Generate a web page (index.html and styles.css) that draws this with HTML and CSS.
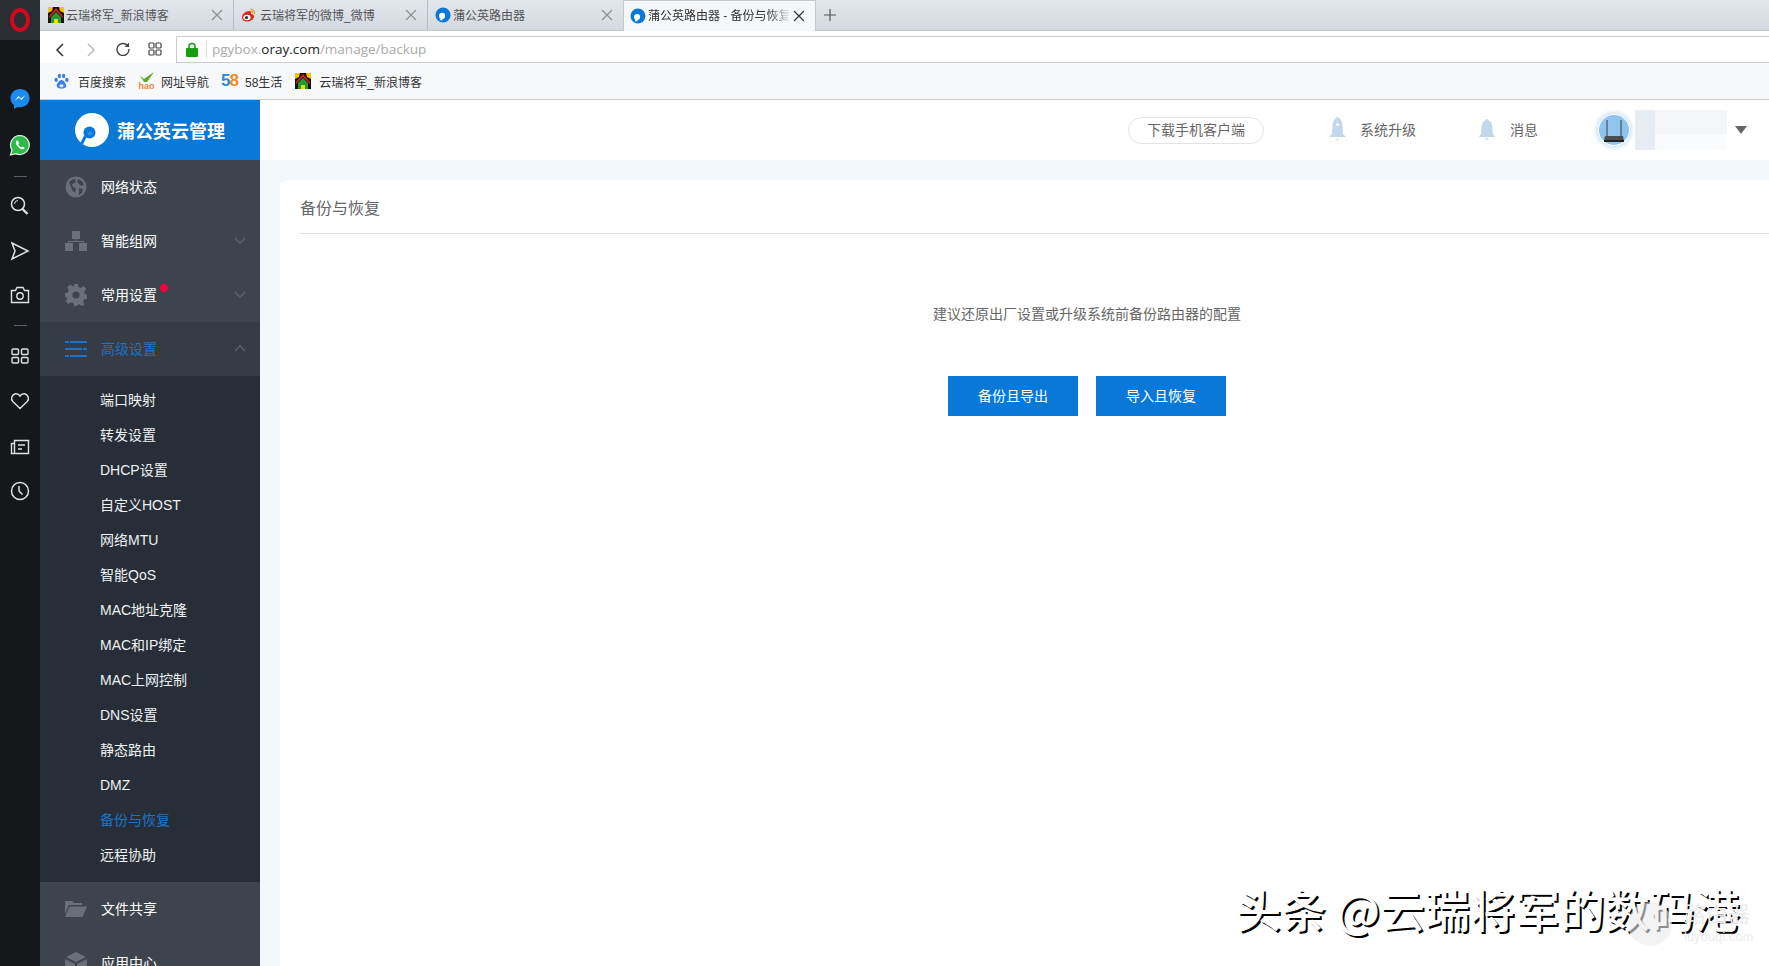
FILE: index.html
```html
<!DOCTYPE html>
<html lang="zh-CN">
<head>
    <meta charset="UTF-8">
    <title>蒲公英路由器 - 备份与恢复</title>
    <link rel="stylesheet" href="styles.css">
</head>
<body>
<svg class="defs" width="0" height="0">
    <symbol id="i-house" viewBox="0 0 16 16">
        <rect width="16" height="16" fill="#111"/>
        <path d="M0 0h5l-1 4-4 2zM16 0h-5l1 4 4 2z" fill="#f2c200"/>
        <path d="M8 1l7 8v2L8 4 1 11V9z" fill="#d8201c"/>
        <path d="M3 16v-6l5-5 5 5v6h-3v-4H6v4z" fill="#1e9c2e"/>
        <path d="M6 16v-4h4v4z" fill="#f2d600"/>
    </symbol>
    <symbol id="i-fav" viewBox="0 0 18 18">
        <circle cx="9" cy="9" r="8.500" fill="#0a78d6"/>
        <circle cx="8" cy="10" r="3.400" fill="#fff"/>
        <path d="M5 15l2-3 2 3z" fill="#fff"/>
    </symbol>
</svg>
<aside class="rail">
    <div class="rail-top">
        <svg width="22" height="24" viewBox="0 0 22 24"><ellipse cx="11" cy="12" rx="8" ry="10" fill="none" stroke="#d2081e" stroke-width="4"/></svg>
    </div>
    <div class="rail-icons">
        <svg class="r-msg" width="22" height="24" viewBox="0 0 22 24"><path d="M11 2C5.500 2 1.500 6 1.500 11c0 3 1.300 5.400 3.500 7v4l3.500-2c.8.200 1.600.300 2.500.300 5.500 0 9.500-4 9.500-9.300S16.500 2 11 2z" fill="#1a8cf0"/><path d="M5.500 14l4-5 2.500 2.500L16.500 8l-4 5-2.500-2.500z" fill="#fff"/></svg>
        <svg class="r-wa" width="22" height="24" viewBox="0 0 22 24"><path d="M11 2.500a9.500 9.500 0 0 0-8 14.500L1.500 22l5.200-1.400A9.500 9.500 0 1 0 11 2.500z" fill="#2fb84a" stroke="#e8f5ea" stroke-width="1.200"/><path d="M7.500 7.500c-1 1-1 2.800.5 5s3.800 3.800 5.500 3.800c1 0 2-.6 2.200-1.600l-2.200-1.300-1 1c-1.300-.4-2.800-2-3.200-3.200l1-1-1.200-2.500z" fill="#fff"/></svg>
        <i class="r-dash"></i>
        <svg class="r-search" width="20" height="20" viewBox="0 0 20 20" fill="none" stroke="#dfe2e4" stroke-width="1.500"><circle cx="8" cy="8" r="6.500"/><path d="M12.500 13l5 5" stroke-width="2.400"/><path d="M4.500 8A3.500 3.500 0 0 1 8 4.500" stroke-width="1"/></svg>
        <svg class="r-send" width="20" height="22" viewBox="0 0 20 22" fill="none" stroke="#dfe2e4" stroke-width="1.500"><path d="M2 3l16 8-16 8 3-8z"/></svg>
        <svg class="r-cam" width="20" height="18" viewBox="0 0 20 18" fill="none" stroke="#dfe2e4" stroke-width="1.400"><path d="M1.500 4.500h4l1.500-3h6l1.500 3h4v12h-17z"/><circle cx="10" cy="10" r="3.200"/></svg>
        <i class="r-dash r-dash2"></i>
        <svg class="r-grid" width="18" height="16" viewBox="0 0 18 16" fill="none" stroke="#dfe2e4" stroke-width="1.400"><rect x="1" y="1" width="6.500" height="5.500" rx="1"/><rect x="10.500" y="1" width="6.500" height="5.500" rx="1"/><rect x="1" y="9.500" width="6.500" height="5.500" rx="1"/><rect x="10.500" y="9.500" width="6.500" height="5.500" rx="1"/></svg>
        <svg class="r-heart" width="20" height="18" viewBox="0 0 20 18" fill="none" stroke="#dfe2e4" stroke-width="1.400"><path d="M10 16.500L2.800 9.500C.5 7 1.500 2.500 5.500 1.800 7.500 1.500 9 2.500 10 4c1-1.500 2.500-2.500 4.500-2.200 4 .7 5 5.200 2.700 7.700z"/></svg>
        <svg class="r-news" width="20" height="16" viewBox="0 0 20 16" fill="none" stroke="#dfe2e4" stroke-width="1.400"><path d="M4.500 1.500h14v13H1.500v-10h3zM4.500 4.500v10M8 6h7M8 10h4"/></svg>
        <svg class="r-clock" width="20" height="20" viewBox="0 0 20 20" fill="none" stroke="#dfe2e4" stroke-width="1.500"><circle cx="10" cy="10" r="8.500"/><path d="M9 5v5l3.500 3.500"/></svg>
    </div>
</aside>

<div class="window">
    <div class="tabs">
        <div class="tab tab-1">
            <svg width="16" height="16"><use href="#i-house"/></svg>
            <span class="tab-text">云瑞将军_新浪博客</span>
            <svg class="tab-x" width="12" height="12" viewBox="0 0 12 12"><path d="M1 1l10 10M11 1L1 11" stroke="#8a8d92" stroke-width="1.100"/></svg>
        </div>
        <div class="tab tab-2">
            <svg width="16" height="16" viewBox="0 0 16 16"><path d="M2 10c0-3 4-6 7-6 2 0 2.500 1.500 2 3 2 0 3 1 3 2.500C14 12 11 14.500 7 14.500 4 14.500 2 13 2 10z" fill="#d8281e"/><ellipse cx="7" cy="10.500" rx="3.600" ry="2.700" fill="#fff"/><circle cx="6.500" cy="10.500" r="1.500" fill="#222"/><path d="M10 2c3 0 5 2 4.500 5M10.500 4c1.500 0 2.500 1 2.200 2.500" fill="none" stroke="#f09a1a" stroke-width="1.200"/></svg>
            <span class="tab-text">云瑞将军的微博_微博</span>
            <svg class="tab-x" width="12" height="12" viewBox="0 0 12 12"><path d="M1 1l10 10M11 1L1 11" stroke="#8a8d92" stroke-width="1.100"/></svg>
        </div>
        <div class="tab tab-3">
            <svg width="16" height="16"><use href="#i-fav"/></svg>
            <span class="tab-text">蒲公英路由器</span>
            <svg class="tab-x" width="12" height="12" viewBox="0 0 12 12"><path d="M1 1l10 10M11 1L1 11" stroke="#8a8d92" stroke-width="1.100"/></svg>
        </div>
        <div class="tab tab-on">
            <svg width="16" height="16"><use href="#i-fav"/></svg>
            <span class="tab-text">蒲公英路由器 - 备份与恢复</span>
            <svg class="tab-x" width="12" height="12" viewBox="0 0 12 12"><path d="M1 1l10 10M11 1L1 11" stroke="#333" stroke-width="1.200"/></svg>
        </div>
        <svg class="tab-add" width="12" height="12" viewBox="0 0 12 12"><path d="M6 0v12M0 6h12" stroke="#555" stroke-width="1.200"/></svg>
    </div>

    <div class="toolbar">
        <svg class="tb-btn" width="10" height="16" viewBox="0 0 10 16"><path d="M8 2L2 8l6 6" fill="none" stroke="#333" stroke-width="1.500"/></svg>
        <svg class="tb-btn" width="10" height="16" viewBox="0 0 10 16"><path d="M2 2l6 6-6 6" fill="none" stroke="#bbb" stroke-width="1.500"/></svg>
        <svg class="tb-btn" width="14" height="14" viewBox="0 0 14 14"><path d="M11.500 3.500A6 6 0 1 0 13 7" fill="none" stroke="#444" stroke-width="1.400"/><path d="M13 .5v4.500H8.500z" fill="#444"/></svg>
        <svg class="tb-btn" width="14" height="14" viewBox="0 0 14 14" fill="none" stroke="#444" stroke-width="1.200"><rect x="1" y="1" width="5" height="5" rx="1"/><rect x="8" y="1" width="5" height="5" rx="1"/><rect x="1" y="8" width="5" height="5" rx="1"/><rect x="8" y="8" width="5" height="5" rx="1"/></svg>
        <div class="address">
            <svg width="12" height="15" viewBox="0 0 12 15"><path d="M3 7V4.500a3 3 0 0 1 6 0V7" fill="none" stroke="#12a012" stroke-width="1.600"/><rect y="6" width="12" height="9" rx="1" fill="#12a012"/></svg>
            <i class="addr-sep"></i>
            <span class="url">pgybox.<b>oray.com</b>/manage/backup</span>
        </div>
    </div>

    <div class="bookmarks">
        <a class="bm bm-1">
            <svg width="15" height="16" viewBox="0 0 14 15" fill="#3f7fe0"><ellipse cx="2" cy="6.500" rx="1.600" ry="2"/><ellipse cx="5" cy="2.800" rx="1.600" ry="2.200"/><ellipse cx="9" cy="2.800" rx="1.600" ry="2.200"/><ellipse cx="12" cy="6.500" rx="1.600" ry="2"/><path d="M7 6.500c2 0 4.500 3.500 4.500 5.500S9 15 7 14.500C5 15 2.500 14 2.500 12S5 6.500 7 6.500z"/><ellipse cx="7" cy="12" rx="2" ry="1.500" fill="#dbe8fb"/></svg>
            <span>百度搜索</span>
        </a>
        <a class="bm bm-2">
            <span class="hao"><svg width="17" height="10" viewBox="0 0 17 10"><path d="M2 3.500l4 3.500L16 0l-7 10H6z" fill="#5fa52a"/></svg><em>hao</em></span>
            <span>网址导航</span>
        </a>
        <a class="bm bm-3">
            <span class="b58"><em class="c5">5</em><em class="c8">8</em></span>
            <span>58生活</span>
        </a>
        <a class="bm bm-4">
            <svg width="16" height="16"><use href="#i-house"/></svg>
            <span>云瑞将军_新浪博客</span>
        </a>
    </div>

    <div class="page">
        <nav class="nav">
            <div class="logo">
                <svg width="34" height="34" viewBox="0 0 34 34"><circle cx="17" cy="17" r="17" fill="#fff"/><circle cx="14.500" cy="19.500" r="6" fill="#0a78d6"/><path d="M10.500 23L6.500 31" stroke="#0a78d6" stroke-width="3"/><circle cx="15" cy="20.500" r="2.200" fill="#2f8fe0"/></svg>
                <span>蒲公英云管理</span>
            </div>
            <div class="nav-item">
                <svg class="nav-ico" width="22" height="22" viewBox="0 0 22 22"><circle cx="11" cy="11" r="10.500" fill="#6b7078"/><path d="M4 6l4-3 3 1-1 3-3 1 1 3 3 1-1 5-3-3-1-3zM13 3l4 2 2 4-3 1-2-2-2-2zM14 12l4 1-1 4-3 2z" fill="#3d444e"/></svg>
                <span>网络状态</span>
            </div>
            <div class="nav-item">
                <svg class="nav-ico" width="22" height="20" viewBox="0 0 22 20" fill="#6b7078"><rect x="7" y="0" width="8" height="8"/><rect x="0" y="12" width="8" height="8"/><rect x="14" y="12" width="8" height="8"/><path d="M10.500 8h1v2H19v2h-1v-1H4v1H3v-2h7.500z"/></svg>
                <span>智能组网</span>
                <svg class="chev" width="12" height="7" viewBox="0 0 12 7"><path d="M1 1l5 5 5-5" fill="none" stroke="#5b626c" stroke-width="1.300"/></svg>
            </div>
            <div class="nav-item">
                <svg class="nav-ico" width="22" height="22" viewBox="0 0 22 22"><path d="M9 0h4l.6 3 2.400 1 2.600-1.700 2.800 2.800L19 7.700l1 2.400 2 .9v4l-3 .6-1 2.400 1.700 2.600-2.800 1.300-2.600-1.700-2.300 1L13 22H9l-.6-2.800-2.400-1-2.600 1.700-2.800-2.800L2.300 15.500l-1-2.400L0 13V9l2.800-.6 1-2.400-1.600-2.600L5 .6l2.600 1.700L9 2z" fill="#6b7078"/><circle cx="11" cy="11" r="3.600" fill="#3d444e"/></svg>
                <span class="has-dot">常用设置<i class="dot"></i></span>
                <svg class="chev" width="12" height="7" viewBox="0 0 12 7"><path d="M1 1l5 5 5-5" fill="none" stroke="#5b626c" stroke-width="1.300"/></svg>
            </div>
            <div class="nav-item nav-open">
                <svg class="nav-ico" width="22" height="16" viewBox="0 0 22 16" fill="#1a73c8"><path d="M0 0h4v2H0zM5 0h17v2H5zM0 7h17v2H0zM18 7h4v2h-4zM0 14h4v2H0zM5 14h17v2H5z"/></svg>
                <span>高级设置</span>
                <svg class="chev" width="12" height="7" viewBox="0 0 12 7"><path d="M1 6l5-5 5 5" fill="none" stroke="#5b626c" stroke-width="1.300"/></svg>
            </div>
            <ul class="sub">
                <li>端口映射</li>
                <li>转发设置</li>
                <li>DHCP设置</li>
                <li>自定义HOST</li>
                <li>网络MTU</li>
                <li>智能QoS</li>
                <li>MAC地址克隆</li>
                <li>MAC和IP绑定</li>
                <li>MAC上网控制</li>
                <li>DNS设置</li>
                <li>静态路由</li>
                <li>DMZ</li>
                <li class="cur">备份与恢复</li>
                <li>远程协助</li>
            </ul>
            <div class="nav-item">
                <svg class="nav-ico" width="22" height="16" viewBox="0 0 22 16" fill="#6b7078"><path d="M0 0h7l2 2h8v2H4L0 13z"/><path d="M4.500 5.500H22L17.500 16H0z"/></svg>
                <span>文件共享</span>
            </div>
            <div class="nav-item">
                <svg class="nav-ico" width="22" height="22" viewBox="0 0 22 22" fill="#6b7078"><path d="M11 0l10 5-10 5L1 5z"/><path d="M0 7l10 5v10L0 17zM22 7l-10 5v10l10-5z"/></svg>
                <span>应用中心</span>
            </div>
        </nav>

        <main class="main">
            <header class="head">
                <a class="pill">下载手机客户端</a>
                <a class="head-link head-up">
                    <svg width="17" height="26" viewBox="0 0 17 26"><path d="M8.500 0c3 1.500 4.500 4 5 8l.5 9 3 3H0l3-3 .5-9c.5-4 2-6.500 5-8z" fill="#c3d6ec"/><circle cx="8.500" cy="7.500" r="1.600" fill="#fff"/><rect x="7.500" y="21.500" width="2" height="2.500" fill="#d8e4f2"/></svg>
                    <span>系统升级</span>
                </a>
                <a class="head-link head-msg">
                    <svg width="16" height="24" viewBox="0 0 16 24"><path d="M8 1c1 0 1.500.8 1.500 1.500C12.500 3.500 13 6 13.500 10l.5 6 2 3H0l2-3 .5-6C3 6 3.500 3.500 6.500 2.500 6.500 1.800 7 1 8 1z" fill="#c3d6ec"/><rect x="6.500" y="20" width="3" height="2.500" rx="1" fill="#d8e4f2"/></svg>
                    <span>消息</span>
                </a>
                <div class="avatar">
                    <svg width="30" height="30" viewBox="0 0 30 30"><circle cx="15" cy="15" r="15" fill="#8fc4ee"/><path d="M8 5v16M22 5v16" stroke="#45484c" stroke-width="1.100"/><path d="M6 21h18l1 5H5z" fill="#4a4d52"/><rect x="5" y="25" width="20" height="2" fill="#222"/></svg>
                </div>
                <div class="user-blur"></div>
                <i class="caret"></i>
            </header>
            <section class="card">
                <h2 class="card-title">备份与恢复</h2>
                <p class="tip">建议还原出厂设置或升级系统前备份路由器的配置</p>
                <div class="actions">
                    <button class="btn">备份且导出</button>
                    <button class="btn">导入且恢复</button>
                </div>
            </section>
        </main>
    </div>
</div>

<div class="mark">
    <span class="mark-text">头条 @云瑞将军的数码港</span>
    <i class="mark-ring"></i>
    <span class="mark-site"><b>路由器</b>luyouqi.com</span>
</div>
</body>
</html>
```

FILE: styles.css
```css
* {
    margin: 0;
    padding: 0;
    box-sizing: border-box;
}

html, body {
    height: 100%;
    overflow: hidden;
}

body {
    display: flex;
    font-family: "Liberation Sans", "Noto Sans CJK SC", sans-serif;
    font-size: 14px;
    color: #333;
    background: #fff;
}

.defs {
    position: absolute;
}

ul {
    list-style: none;
}

em {
    font-style: normal;
}

/* opera side rail */
.rail {
    flex: 0 0 40px;
    background: #14181b;
}

.rail-top {
    height: 40px;
    display: flex;
    align-items: center;
    justify-content: center;
    background: #2a2e33;
}

.rail-icons {
    display: flex;
    flex-direction: column;
    align-items: center;
    padding-top: 47px;
}

.r-wa { margin-top: 22px; }
.r-send { margin-top: 24px; }
.r-cam { margin-top: 24px; }
.r-heart { margin-top: 28px; }
.r-news { margin-top: 29px; }
.r-clock { margin-top: 26px; }

.r-dash {
    display: block;
    width: 13px;
    height: 1px;
    margin-top: 19px;
    background: #5a5e62;
}

.r-search { margin-top: 19px; }
.r-dash2 { margin-top: 21px; }
.r-grid { margin-top: 22px; }

.window {
    flex: 1;
    min-width: 0;
    display: flex;
    flex-direction: column;
}

/* tabs */
.tabs {
    height: 31px;
    flex: none;
    display: flex;
    align-items: center;
    background: linear-gradient(#e3e7ed, #d4d8df);
    border-bottom: 1px solid #c4c7cb;
    font-size: 12px;
    color: #555;
}

.tab {
    height: 30px;
    display: flex;
    align-items: center;
    padding-right: 10px;
}

.tab-text {
    white-space: nowrap;
    overflow: hidden;
    padding-bottom: 2px;
}

.tab-1,
.tab-2 {
    width: 194px;
    border-right: 1px solid #b9bdc3;
}

.tab-1 { padding-left: 8px; }
.tab-2 { padding-left: 6px; }
.tab-3 { width: 195px; padding-left: 7px; }

.tab-1 .tab-text { flex: 1; padding-left: 2px; }
.tab-2 .tab-text { flex: 1; padding-left: 4px; }
.tab-3 .tab-text { flex: 1; padding-left: 2px; }

.tab-on {
    width: 193px;
    height: 31px;
    padding-left: 6px;
    background: #f6f7f9;
    border: 1px solid #c4c7cb;
    border-width: 1px 1px 0;
    color: #333;
}

.tab-on .tab-text {
    width: 146px;
    padding-left: 2px;
    -webkit-mask-image: linear-gradient(90deg, #000 85%, transparent);
    mask-image: linear-gradient(90deg, #000 85%, transparent);
}

.tab-on .tab-x {
    margin-left: 2px;
}

.tab-add {
    margin-left: 8px;
}

/* toolbar */
.toolbar {
    height: 32px;
    flex: none;
    display: flex;
    padding: 5px 0 0 15px;
    background: #fff;
}

.tb-btn {
    flex: none;
    margin: 6px 21px 0 0;
}

.tb-btn:nth-child(2) { margin-right: 20px; }
.tb-btn:nth-child(3) { margin-right: 18px; }
.tb-btn:nth-child(4) { margin-right: 14px; }

.address {
    flex: 1;
    height: 27px;
    display: flex;
    align-items: center;
    padding-left: 9px;
    border: 1px solid #ccc;
    border-right: 0;
}

.addr-sep {
    width: 1px;
    height: 17px;
    margin: 0 5px 0 8px;
    background: #ddd;
}

.url {
    font-family: "Open Sans", "Liberation Sans", sans-serif;
    font-size: 13.500px;
    padding-bottom: 2px;
    color: #aaa;
}

.url b {
    font-weight: 400;
    color: #222;
}

/* bookmarks */
.bookmarks {
    height: 37px;
    flex: none;
    display: flex;
    align-items: center;
    padding-left: 14px;
    background: #f7f8fa;
    border-bottom: 1px solid #ccc;
    font-size: 12px;
    color: #333;
}

.bm {
    display: flex;
    align-items: center;
}

.bm-1 span { margin-left: 9px; }
.bm-2 { margin-left: 12px; }
.bm-2 > span:last-child { margin-left: 6px; }
.bm-3 { margin-left: 12px; }
.bm-3 > span:last-child { margin-left: 7px; }
.bm-4 { margin-left: 13px; }
.bm-4 span { margin-left: 8px; }

.hao {
    width: 17px;
    display: flex;
    flex-direction: column;
    align-items: center;
    line-height: 8px;
}

.hao em {
    font-size: 9px;
    font-weight: 700;
    color: #e8873a;
}

.b58 {
    font-size: 17px;
    font-weight: 700;
    letter-spacing: -1px;
}

.c5 { color: #2c8ad8; }
.c8 { color: #ef8a2a; }

/* page */
.page {
    flex: 1;
    min-height: 0;
    display: flex;
    overflow: hidden;
}

.nav {
    flex: 0 0 220px;
    background: #3d444e;
    color: #fff;
}

.logo {
    height: 60px;
    display: flex;
    align-items: center;
    padding-left: 35px;
    background: #0a78d6;
    font-size: 18px;
    font-weight: 700;
}

.logo span {
    margin-left: 8px;
}

.nav-item {
    height: 54px;
    display: flex;
    align-items: center;
    position: relative;
    padding: 0 0 2px 61px;
}

.nav-ico {
    position: absolute;
    left: 25px;
    top: 50%;
    transform: translateY(-50%);
}

.chev {
    position: absolute;
    right: 14px;
    top: 23px;
}

.has-dot {
    position: relative;
}

.dot {
    position: absolute;
    left: 59px;
    top: 0;
    width: 8px;
    height: 8px;
    border-radius: 50%;
    background: #f5003c;
}

.nav-open {
    background: #363c46;
    color: #1a73c8;
}

.sub {
    padding: 8px 0;
    background: #272e37;
}

.sub li {
    height: 35px;
    line-height: 33px;
    padding-left: 60px;
    color: #eef1f3;
}

.sub .cur {
    color: #1a73c8;
}

.main {
    flex: 1;
    min-width: 0;
    background: #f3f8fd;
}

.head {
    height: 60px;
    display: flex;
    align-items: center;
    background: #fff;
    color: #666;
    font-size: 14px;
}

.pill {
    width: 136px;
    height: 27px;
    margin-left: 868px;
    border: 1px solid #e2e2e2;
    border-radius: 14px;
    line-height: 25px;
    text-align: center;
}

.head-link {
    display: flex;
    align-items: center;
}

.head-link span {
    margin-left: 14px;
    padding-bottom: 2px;
}

.head-up { margin-left: 65px; }
.head-msg { margin-left: 63px; }
.head-msg span { margin-left: 15px; }

.avatar {
    width: 30px;
    height: 30px;
    margin-left: 61px;
    border-radius: 50%;
    box-shadow: 0 0 0 1px #fff, 0 0 4px 3px #cfe3f8;
}

.avatar svg {
    display: block;
}

.user-blur {
    width: 92px;
    height: 40px;
    margin-left: 6px;
    background:
        linear-gradient(90deg, #e6ecf2 22%, transparent 22%),
        linear-gradient(#f3f5f6 60%, #fafbfd 60%);
}

.caret {
    width: 0;
    height: 0;
    margin: 0 0 0 8px;
    border: 6px solid transparent;
    border-top: 8px solid #666;
    border-bottom: 0;
}

.card {
    width: 1614px;
    height: 800px;
    margin: 20px 0 0 20px;
    padding: 0 20px;
    background: #fff;
    border-radius: 8px 0 0 0;
}

.card-title {
    height: 54px;
    line-height: 58px;
    border-bottom: 1px solid #e0e0e0;
    font-size: 16px;
    font-weight: 400;
    color: #666;
}

.tip {
    margin-top: 70px;
    line-height: 20px;
    text-align: center;
    color: #666;
}

.actions {
    display: flex;
    justify-content: center;
    gap: 18px;
    margin-top: 52px;
}

.btn {
    width: 130px;
    height: 40px;
    padding-bottom: 2px;
    border: 0;
    background: #0a78d6;
    color: #fff;
    font: inherit;
}

/* watermark over the page */
.mark {
    position: absolute;
    left: 1236px;
    top: 877px;
    width: 530px;
    height: 70px;
}

.mark-text {
    position: absolute;
    left: 0;
    top: 0;
    font-family: "Noto Sans CJK SC", sans-serif;
    font-size: 45px;
    font-weight: 500;
    line-height: 64px;
    white-space: nowrap;
    color: #fff;
    text-shadow: 2px 2px 0 #000;
}

.mark-ring {
    position: absolute;
    left: 392px;
    top: 25px;
    width: 44px;
    height: 44px;
    border-radius: 50%;
    background: rgba(235, 235, 235, .6);
}

.mark-site {
    position: absolute;
    left: 448px;
    top: 25px;
    width: 70px;
    font-size: 13px;
    line-height: 18px;
    color: #ececec;
}

.mark-site b {
    display: block;
    font-size: 22px;
    font-weight: 400;
    line-height: 26px;
}
```
